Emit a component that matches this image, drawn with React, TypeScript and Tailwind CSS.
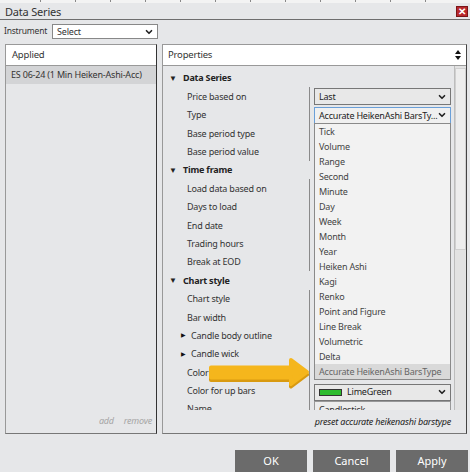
import { ChevronDown } from "lucide-react";

const font = { fontFamily: '"Noto Sans", "Open Sans", sans-serif' };

type Row = {
  label: string;
  kind?: "section" | "sub";
  value?: "last" | "type" | "lime" | "name";
};

const rows: Row[] = [
  { label: "Data Series", kind: "section" },
  { label: "Price based on", value: "last" },
  { label: "Type", value: "type" },
  { label: "Base period type" },
  { label: "Base period value" },
  { label: "Time frame", kind: "section" },
  { label: "Load data based on" },
  { label: "Days to load" },
  { label: "End date" },
  { label: "Trading hours" },
  { label: "Break at EOD" },
  { label: "Chart style", kind: "section" },
  { label: "Chart style" },
  { label: "Bar width" },
  { label: "Candle body outline", kind: "sub" },
  { label: "Candle wick", kind: "sub" },
  { label: "Color for down bars" },
  { label: "Color for up bars", value: "lime" },
  { label: "Name", value: "name" },
];

const barTypes = [
  "Tick",
  "Volume",
  "Range",
  "Second",
  "Minute",
  "Day",
  "Week",
  "Month",
  "Year",
  "Heiken Ashi",
  "Kagi",
  "Renko",
  "Point and Figure",
  "Line Break",
  "Volumetric",
  "Delta",
  "Accurate HeikenAshi BarsType",
];

function Chevron() {
  return <ChevronDown size={10} strokeWidth={4} className="text-[#222] shrink-0" />;
}

function Value({ v }: { v?: Row["value"] }) {
  if (v === "last")
    return (
      <div className="mt-[1px] h-[17px] w-[137px] border border-[#777] bg-[#e8e8e8] flex items-center justify-between pl-[4px] pr-[3px] text-[9px] text-[#222]">
        <span>Last</span>
        <Chevron />
      </div>
    );
  if (v === "type")
    return (
      <div className="mt-[1px] h-[17px] w-[137px] border border-[#6a9fd8] bg-[#f0f0f0] flex items-center justify-between pl-[4px] pr-[3px] text-[9px] text-[#222]">
        <span className="whitespace-nowrap">Accurate HeikenAshi BarsTy...</span>
        <Chevron />
      </div>
    );
  if (v === "lime")
    return (
      <div className="mt-[2px] h-[17px] w-[137px] border border-[#777] bg-[#e8e8e8] flex items-center justify-between pl-[4px] pr-[3px] text-[9px] text-[#222]">
        <div className="flex items-center gap-[5px]">
          <div className="w-[23px] h-[7px] bg-[#2dbb2d] border border-[#333]" />
          <span>LimeGreen</span>
        </div>
        <Chevron />
      </div>
    );
  if (v === "name")
    return (
      <div className="mt-[1px] h-[17px] w-[137px] border border-[#999] bg-[#ececec] pl-[4px] text-[9px] text-[#333] leading-[15px]">
        Candlestick
      </div>
    );
  return null;
}

function PropRow({ row }: { row: Row }) {
  if (row.kind === "section")
    return (
      <div className="h-[18.4px] flex items-center text-[9px] font-bold text-[#222]">
        <span className="w-[20px] pl-[6px] text-[8px] tracking-normal">▼</span>
        <span>{row.label}</span>
      </div>
    );
  return (
    <div className="h-[18.4px] flex">
      <div className="w-[147px] flex items-center border-r border-[#8a8a8a] text-[9px] text-[#333]">
        {row.kind === "sub" ? (
          <>
            <span className="w-[28px] pl-[18px] text-[6px] text-[#111]">▶</span>
            <span>{row.label}</span>
          </>
        ) : (
          <span className="pl-[24px]">{row.label}</span>
        )}
      </div>
      <div className="pl-[4px]">
        <Value v={row.value} />
      </div>
    </div>
  );
}

export default function App() {
  return (
    <div className="w-[470px] h-[472px] bg-[#e6e7e9] overflow-hidden relative tracking-[-0.2px]" style={font}>
      {/* window strip behind */}
      <div className="h-[3px] bg-[#f3f3f3] flex gap-[34px] pl-[40px]">
        {Array.from({ length: 12 }).map((_, i) => (
          <div key={i} className="w-px h-[2px] bg-[#888]" />
        ))}
      </div>

      {/* title */}
      <div className="h-[16px] flex items-center justify-between pl-[5px] pr-[2px]">
        <span className="text-[11px] text-[#333] leading-none">Data Series</span>
        <div className="w-[12px] h-[11px] bg-[#b8282c] border border-[#7a1518] flex items-center justify-center text-white text-[10px] font-bold leading-none">
          ✕
        </div>
      </div>
      <div className="h-[1px] bg-[#6e6e6e]" />

      {/* instrument */}
      <div className="h-[23px] flex items-center pl-[4px] gap-[5px]">
        <span className="text-[8.5px] text-[#333]">Instrument</span>
        <div className="w-[106px] h-[15px] bg-white border border-[#888] flex items-center justify-between pl-[4px] pr-[3px] text-[9px] text-[#333]">
          <span>Select</span>
          <Chevron />
        </div>
      </div>

      {/* panels */}
      <div className="h-[390px] flex pl-[5px] gap-[5px] mt-[1px]">
        <div className="w-[152px] flex flex-col border border-[#999] border-r-[#333] border-b-[#777]">
          <div className="h-[21px] bg-white border-b border-[#999] flex items-center pl-[6px] text-[9.5px] text-[#333]">
            Applied
          </div>
          <div className="h-[18px] bg-[#d3d4d6] flex items-center pl-[5px] text-[9px] text-[#333] whitespace-nowrap">
            ES 06-24 (1 Min Heiken-Ashi-Acc)
          </div>
          <div className="flex-1" />
          <div className="h-[19px] flex items-start justify-end gap-[10px] pr-[4px] text-[9px] italic text-[#a5a5a5]">
            <span>add</span>
            <span>remove</span>
          </div>
        </div>

        <div className="w-[305px] flex flex-col border border-[#999] border-r-[#444] border-b-[#777] relative">
          <div className="h-[21px] bg-white border-b border-[#999] flex items-center justify-between pl-[5px] pr-[5px] text-[9.5px] text-[#333]">
            <span>Properties</span>
            <div className="flex flex-col items-center gap-[2px] tracking-normal">
              <div className="w-0 h-0 border-l-[3px] border-r-[3px] border-b-[4px] border-l-transparent border-r-transparent border-b-[#111]" />
              <div className="w-0 h-0 border-l-[3px] border-r-[3px] border-t-[4px] border-l-transparent border-r-transparent border-t-[#111]" />
            </div>
          </div>
          <div className="h-[344px] flex">
            <div className="flex-1 pt-[3px] overflow-hidden">
              {rows.map((r, i) => (
                <PropRow key={i} row={r} />
              ))}
            </div>
            <div className="w-[12px] border-l border-[#bdbdbd] bg-[#e2e2e2] pt-[2px]">
              <div className="h-[182px] bg-[#ededed] border border-[#d0d0d0]" />
            </div>
          </div>
          <div className="flex-1 flex items-center justify-end pr-[15px] text-[9px] italic text-[#222]">
            preset accurate heikenashi barstype
          </div>

          {/* open dropdown list */}
          <div className="absolute left-[151px] top-[78px] w-[137px] border border-[#8a8a8a] bg-[#f2f2f2] flex flex-col">
            {barTypes.map((t, i) => (
              <div
                key={t}
                className={`h-[15px] flex items-center pl-[4px] text-[9px] whitespace-nowrap ${
                  i === barTypes.length - 1 ? "bg-[#d9d9d9] text-[#666]" : "text-[#444]"
                }`}
              >
                {t}
              </div>
            ))}
          </div>
        </div>
      </div>

      {/* buttons */}
      <div className="flex justify-end gap-[6px] pr-[2px] mt-[16px] tracking-normal">
        <div className="w-[72px] h-[22px] bg-[#6b6b6b] flex items-center justify-center text-white text-[11px]">OK</div>
        <div className="w-[77px] h-[22px] bg-[#6b6b6b] flex items-center justify-center text-white text-[11px]">Cancel</div>
        <div className="w-[72px] h-[22px] bg-[#6b6b6b] flex items-center justify-center text-white text-[11px]">Apply</div>
      </div>

      {/* yellow pointer arrow */}
      <svg className="absolute left-[205px] top-[357px]" width="106" height="32" viewBox="0 0 106 32">
        <path
          d="M6 11.5 L86 11.5 L86 4 L102 16 L86 28 L86 21.5 L6 21.5 Z"
          fill="#d99a10"
          stroke="#d99a10"
          strokeWidth="4"
          strokeLinejoin="round"
          transform="translate(0 1.5)"
        />
        <path
          d="M6 10.5 L86 10.5 L86 3 L102 15 L86 27 L86 20.5 L6 20.5 Z"
          fill="#f5b61c"
          stroke="#f5b61c"
          strokeWidth="4"
          strokeLinejoin="round"
        />
      </svg>
    </div>
  );
}
